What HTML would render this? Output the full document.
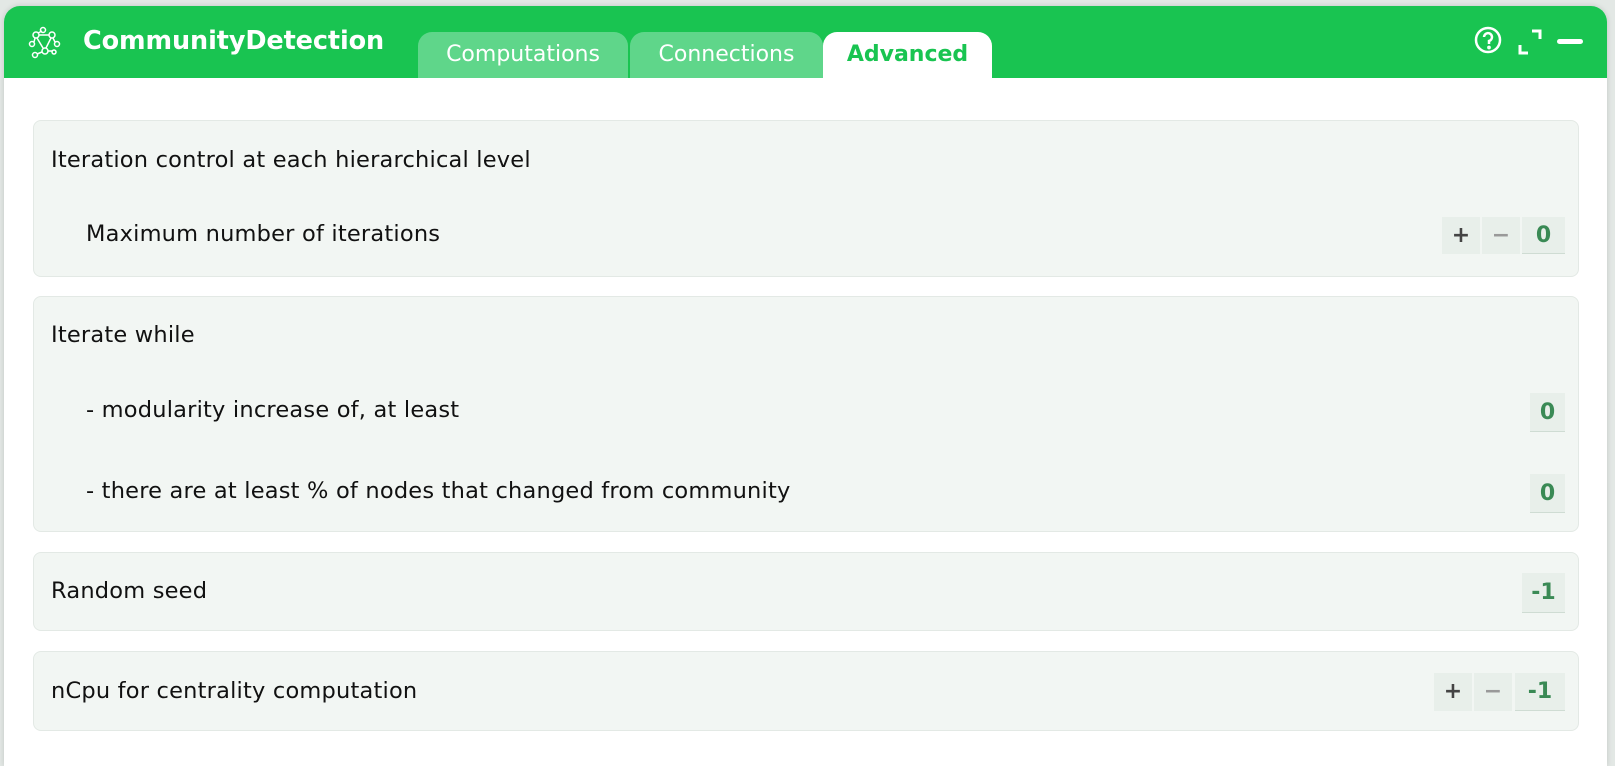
<!DOCTYPE html>
<html><head><meta charset="utf-8"><style>
*{box-sizing:border-box;margin:0;padding:0}
body{width:1615px;height:750px;background:#e3e8e5;font-family:"DejaVu Sans","Liberation Sans",sans-serif;position:relative;overflow:hidden}
.panel{position:absolute;left:4px;top:6px;width:1603px;height:760px;background:#fff;border-radius:16px 16px 0 0;overflow:hidden;box-shadow:0 0 6px rgba(0,0,0,.15)}
.hdr{position:absolute;left:0;top:0;width:100%;height:72px;background:#19c451}
.title{position:absolute;left:79px;top:20px;color:#fff;font-weight:bold;font-size:25.5px;letter-spacing:-0.1px}
.tab{position:absolute;top:26px;height:46px;border-radius:14px 14px 0 0;font-size:22px;color:#fff;text-align:center;line-height:46px;background:#5fd68a}
.tab.act{background:#fff;color:#19c451;font-weight:bold}
.card{position:absolute;left:29px;width:1546px;background:#f2f6f3;border:1px solid #e3e9e5;border-radius:8px}
.t{position:absolute;font-size:22.5px;letter-spacing:0.2px;color:#111;white-space:nowrap;transform:translateY(-50%)}
.box{position:absolute;background:#e8efea;font-size:22px;font-weight:bold;text-align:center;color:#3a8a55}
.box.v{border-bottom:1px solid #cfdcd3}
.box.p{color:#444}.box.m{color:#999}
</style></head><body>
<div class="panel">
<div class="hdr">
<svg style="position:absolute;left:24px;top:20px" width="34" height="34" viewBox="0 0 34 34" fill="none" stroke="#fff" stroke-width="1.5">
<circle cx="15" cy="4" r="2.5"/><circle cx="8" cy="9" r="3"/><circle cx="24" cy="9" r="3"/><circle cx="4" cy="18" r="2.5"/><circle cx="29" cy="18" r="2.5"/><circle cx="17" cy="25" r="3"/><circle cx="7" cy="29" r="2.5"/><circle cx="26" cy="26" r="2"/>
<path d="M11 9h10M9 12l6 10M23 12l-5 10M14 5l-4 2M6 16l1-4M27 16l-2-4M14 26l-5 2M20 25l4 0"/></svg>
<div class="title">CommunityDetection</div>
<div class="tab" style="left:414px;width:210px">Computations</div>
<div class="tab" style="left:626px;width:193px">Connections</div>
<div class="tab act" style="left:819px;width:169px">Advanced</div>
<svg style="position:absolute;left:1470px;top:20px" width="28" height="28" viewBox="0 0 28 28" fill="none" stroke="#fff" stroke-width="2.5"><circle cx="14" cy="14" r="12"/><path d="M10 11a4 4 0 1 1 5 4v3"/><circle cx="15" cy="21.5" r="0.6" fill="#fff"/></svg>
<svg style="position:absolute;left:1513px;top:22px" width="28" height="28" viewBox="0 0 28 28" fill="none" stroke="#fff" stroke-width="3"><path d="M15 3h8v8M3 17v8h8"/></svg>
<div style="position:absolute;left:1553px;top:33px;width:26px;height:5px;border-radius:3px;background:#fff"></div>
</div>
<div class="card" style="top:114px;height:157px"></div>
<div class="card" style="top:290px;height:236px"></div>
<div class="card" style="top:546px;height:79px"></div>
<div class="card" style="top:645px;height:80px"></div>
</div>
<div class="t" style="left:51px;top:160px">Iteration control at each hierarchical level</div>
<div class="t" style="left:86px;top:234px">Maximum number of iterations</div>
<div class="box p" style="left:1442px;top:217px;width:38px;height:37px;line-height:37px">+</div>
<div class="box m" style="left:1482px;top:217px;width:38px;height:37px;line-height:37px">−</div>
<div class="box v" style="left:1522px;top:217px;width:43px;height:37px;line-height:37px">0</div>
<div class="t" style="left:51px;top:335px">Iterate while</div>
<div class="t" style="left:86px;top:410px">- modularity increase of, at least</div>
<div class="box v" style="left:1530px;top:393px;width:35px;height:39px;line-height:39px">0</div>
<div class="t" style="left:86px;top:491px">- there are at least % of nodes that changed from community</div>
<div class="box v" style="left:1530px;top:474px;width:35px;height:39px;line-height:39px">0</div>
<div class="t" style="left:51px;top:591px">Random seed</div>
<div class="box v" style="left:1522px;top:573px;width:43px;height:40px;line-height:40px">-1</div>
<div class="t" style="left:51px;top:691px">nCpu for centrality computation</div>
<div class="box p" style="left:1434px;top:673px;width:38px;height:38px;line-height:38px">+</div>
<div class="box m" style="left:1474px;top:673px;width:38px;height:38px;line-height:38px">−</div>
<div class="box v" style="left:1515px;top:673px;width:50px;height:38px;line-height:38px">-1</div>
</body></html>
